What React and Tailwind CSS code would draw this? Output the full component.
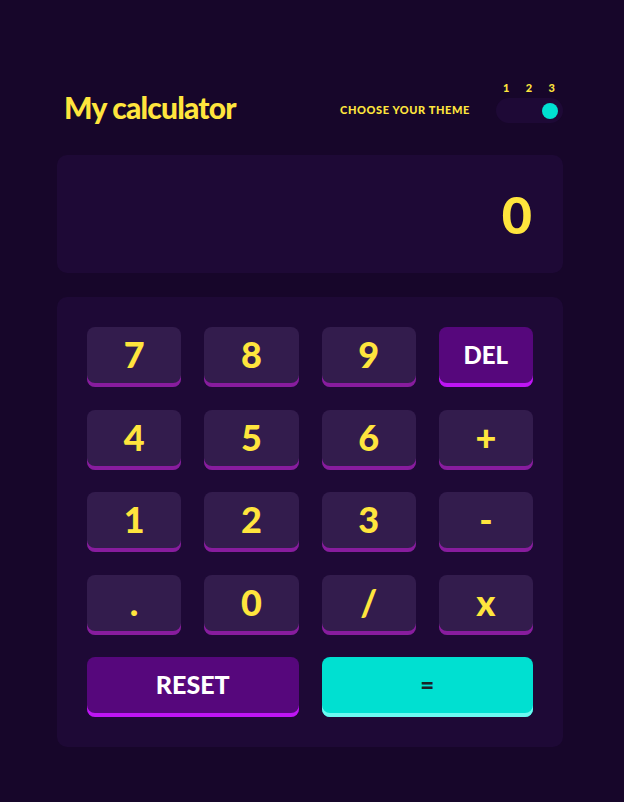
import React from 'react';

const keys = [
    { label: '7' }, { label: '8' }, { label: '9' }, { label: 'DEL', kind: 'del' },
    { label: '4' }, { label: '5' }, { label: '6' }, { label: '+' },
    { label: '1' }, { label: '2' }, { label: '3' }, { label: '-' },
    { label: '.' }, { label: '0' }, { label: '/' }, { label: 'x' },
];

function Key({ label, kind }) {
    if (kind === 'del') {
        return (
            <button className="h-[60px] rounded-[8px] bg-[#56077c] shadow-[inset_0_-4px_0_#be15f4] text-white text-[24px] font-black pb-[4px] flex items-center justify-center">
                {label}
            </button>
        );
    }
    return (
        <button className="h-[60px] rounded-[8px] bg-[#331c4d] shadow-[inset_0_-4px_0_#881c9e] text-[#ffe53d] text-[36px] font-black pb-[6px] flex items-center justify-center">
            {label}
        </button>
    );
}

export default function App() {
    return (
        <div className="min-h-[802px] bg-[#17062a] pl-[57px] font-['Lato','Liberation_Sans',sans-serif]">
            <div className="w-[506px] pt-[82px]">
                {/* ヘッダー */}
                <div className="flex items-end justify-between">
                    <h1 className="pl-[7px] text-[30px] leading-[32px] font-black text-[#ffe53d] tracking-[-0.8px]">My calculator</h1>
                    <div className="flex items-end gap-[26px]">
                        <span className="mb-[7px] text-[11px] leading-[12px] font-black tracking-[0.6px] text-[#ffe53d]">CHOOSE YOUR THEME</span>
                        <div className="flex flex-col">
                            <div className="flex justify-between pl-[7px] pr-[8px] mb-[5px] text-[11px] leading-[11px] font-black text-[#ffe53d]">
                                <span>1</span>
                                <span>2</span>
                                <span>3</span>
                            </div>
                            <div className="w-[67px] h-[25px] rounded-full bg-[#1e0936] px-[5px] flex items-center justify-end">
                                <div className="w-[16px] h-[16px] rounded-full bg-[#00e0d1]" />
                            </div>
                        </div>
                    </div>
                </div>

                {/* スクリーン */}
                <div className="mt-[32px] h-[118px] rounded-[10px] bg-[#1e0936] flex items-center justify-end pr-[31px]">
                    <span className="text-[52px] font-black text-[#ffe53d] leading-none">0</span>
                </div>

                {/* キーパッド */}
                <div className="mt-[24px] rounded-[10px] bg-[#1e0936] p-[30px] grid grid-cols-4 gap-x-[23px] gap-y-[22.5px]">
                    {keys.map((k) => (
                        <Key key={k.label} {...k} />
                    ))}
                    <button className="col-span-2 h-[60px] rounded-[8px] bg-[#56077c] shadow-[inset_0_-4px_0_#be15f4] text-white text-[25px] font-black pb-[4px] flex items-center justify-center">
                        RESET
                    </button>
                    <button className="col-span-2 h-[60px] rounded-[8px] bg-[#00e0d1] shadow-[inset_0_-4px_0_#6cf9f1] text-[#1a2327] text-[24px] font-black pb-[4px] flex items-center justify-center">
                        =
                    </button>
                </div>
            </div>
        </div>
    );
}
